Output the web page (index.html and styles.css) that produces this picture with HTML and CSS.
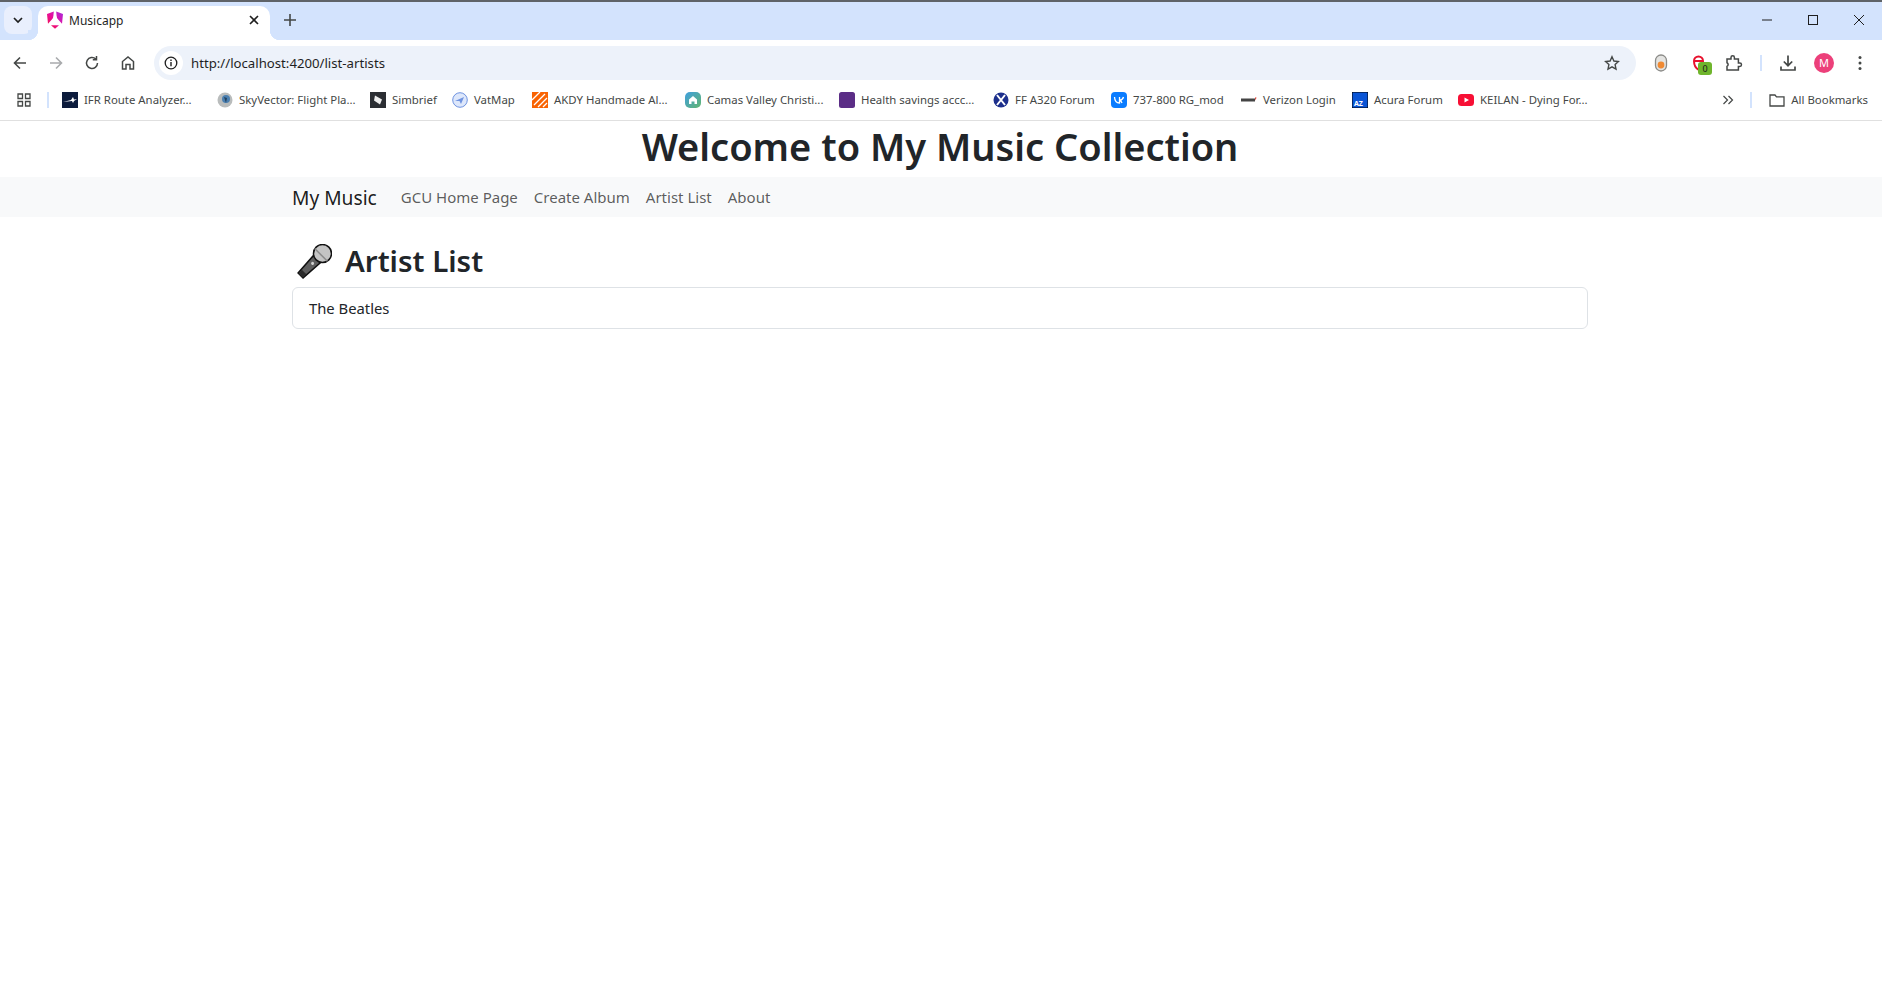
FILE: index.html
```html
<!DOCTYPE html>
<html lang="en">
<head>
  <meta charset="UTF-8">
  <title>Musicapp</title>
  <link rel="stylesheet" href="styles.css">
</head>
<body>

  <!-- Browser window -->
  <div class="tabstrip">
    <div class="tab-search">
      <svg width="12" height="12" viewBox="0 0 12 12"><path d="M2 4l4 4 4-4" fill="none" stroke="#1f1f1f" stroke-width="1.7"/></svg>
    </div>
    <div class="tab">
      <svg width="18" height="18" viewBox="0 0 18 18"><defs><linearGradient id="ng" x1="0" y1="1" x2="1" y2="0"><stop offset="0" stop-color="#f5113a"/><stop offset="0.5" stop-color="#e80f9c"/><stop offset="1" stop-color="#a52be0"/></linearGradient></defs><path d="M7.800 0.500L1 3l1 9.800L7.200 7zM10.200 0.500L17 3l-1 9.800L10.800 7zM5 14.200h8L9 17.800z" fill="url(#ng)"/><path d="M9 2.500L4.500 12.800h2l.8-2h3.400l.8 2h2zM8 9l1-2.800L10 9z" fill="#fff"/></svg>
      <span class="tab-title">Musicapp</span>
      <svg class="tab-close" width="12" height="12" viewBox="0 0 12 12"><path d="M2 2l8 8M10 2l-8 8" stroke="#1f1f1f" stroke-width="1.6"/></svg>
    </div>
    <svg class="new-tab" width="14" height="14" viewBox="0 0 14 14"><path d="M7 1v12M1 7h12" stroke="#444746" stroke-width="1.6"/></svg>
    <div class="window-controls">
      <svg width="12" height="12" viewBox="0 0 12 12"><path d="M1 6h10" stroke="#1f1f1f"/></svg>
      <svg width="12" height="12" viewBox="0 0 12 12"><rect x="1.500" y="1.500" width="9" height="9" fill="none" stroke="#1f1f1f"/></svg>
      <svg width="12" height="12" viewBox="0 0 12 12"><path d="M1 1l10 10M11 1L1 11" stroke="#1f1f1f"/></svg>
    </div>
  </div>

  <div class="toolbar">
    <div class="nav-buttons">
      <svg width="16" height="16" viewBox="0 0 16 16"><path d="M14 8H2.500M8 2.500L2.500 8 8 13.500" fill="none" stroke="#444746" stroke-width="1.600"/></svg>
      <svg width="16" height="16" viewBox="0 0 16 16"><path d="M2 8h11.500M8 2.500L13.500 8 8 13.500" fill="none" stroke="#a9abad" stroke-width="1.600"/></svg>
      <svg width="16" height="16" viewBox="0 0 16 16"><path d="M13.500 8A5.500 5.500 0 1 1 11.800 4M12.500 1v3.700H8.800" fill="none" stroke="#444746" stroke-width="1.500"/></svg>
      <svg width="16" height="16" viewBox="0 0 16 16"><path d="M2.500 14V6.500L8 2l5.500 4.500V14H10V9.500H6V14z" fill="none" stroke="#444746" stroke-width="1.500"/></svg>
    </div>
    <div class="address-bar">
      <span class="site-info">
        <svg width="14" height="14" viewBox="0 0 14 14"><circle cx="7" cy="7" r="5.800" fill="none" stroke="#1f1f1f" stroke-width="1.300"/><path d="M7 6v4.200M7 3.600v1.300" stroke="#1f1f1f" stroke-width="1.400"/></svg>
      </span>
      <span class="url">http://localhost:4200/list-artists</span>
      <svg class="star" width="16" height="16" viewBox="0 0 16 16"><path d="M8 1.800l1.900 4.200 4.500.5-3.300 3.100.9 4.500L8 11.800l-4 2.300.9-4.500L1.600 6.500l4.500-.5z" fill="none" stroke="#444746" stroke-width="1.400"/></svg>
    </div>
    <div class="extensions">
      <svg class="ext-toggle" width="14" height="18" viewBox="0 0 14 18"><rect x="1.500" y="1" width="11" height="16" rx="5.500" fill="#e4e4e2" stroke="#8b8b88" stroke-width="1.300"/><circle cx="7" cy="11" r="3.400" fill="#f08a33"/></svg>
      <span class="ext-badge-wrap">
        <svg width="14" height="18" viewBox="0 0 14 18"><path d="M2 7a4.500 4.500 0 0 1 9 0H3M2 7c0 4 1 7 5 9" fill="none" stroke="#e8112d" stroke-width="2"/></svg>
        <span class="ext-badge">0</span>
      </span>
      <svg width="18" height="18" viewBox="0 0 18 18"><path d="M2 5h4V3.500a1.700 1.700 0 0 1 3.400 0V5h4v4h1.400a1.700 1.700 0 0 1 0 3.400h-1.400V16H2v-3.700a2 2 0 0 0 0-3.600z" fill="none" stroke="#444746" stroke-width="1.500"/></svg>
      <span class="toolbar-sep"></span>
      <svg width="18" height="18" viewBox="0 0 18 18"><path d="M9 1.500v10M4.800 7.500L9 11.700l4.200-4.200M2 12.500v3.500h14v-3.500" fill="none" stroke="#444746" stroke-width="1.700"/></svg>
      <span class="avatar">M</span>
      <svg width="6" height="16" viewBox="0 0 6 16"><circle cx="3" cy="2.500" r="1.500" fill="#444746"/><circle cx="3" cy="8" r="1.500" fill="#444746"/><circle cx="3" cy="13.500" r="1.500" fill="#444746"/></svg>
    </div>
  </div>

  <div class="bookmarks">
    <svg class="apps-icon" width="14" height="14" viewBox="0 0 14 14"><path d="M1 1h4.500v4.500H1zM8.500 1H13v4.500H8.500zM1 8.500h4.500V13H1zM8.500 8.500H13V13H8.500z" fill="none" stroke="#444746" stroke-width="1.300"/></svg>
    <span class="bookmark-sep"></span>
    <a class="bookmark b-ifr"><svg width="16" height="16" viewBox="0 0 16 16"><rect width="16" height="16" fill="#0c1b3c"/><path d="M1 10l8-2 2-3 1 2.500 3-.5-3 2-1 2-1-2z" fill="#fff"/></svg>IFR Route Analyzer...</a>
    <a class="bookmark b-sky"><svg width="16" height="16" viewBox="0 0 16 16"><circle cx="8" cy="8" r="7.500" fill="#b9bcbc"/><circle cx="9" cy="7" r="4" fill="#4a7fb0"/><path d="M7 5l3 1-1 5z" fill="#23425f"/></svg>SkyVector: Flight Pla...</a>
    <a class="bookmark b-sim"><svg width="16" height="16" viewBox="0 0 16 16"><rect width="16" height="16" fill="#2b2e33"/><path d="M5 3.500l7 4-2 5-6-4z" fill="#eee"/></svg>Simbrief</a>
    <a class="bookmark b-vat"><svg width="16" height="16" viewBox="0 0 16 16"><circle cx="8" cy="8" r="7.300" fill="#dde7fb" stroke="#6f93e0"/><path d="M3 9l9-4-3 7-1.500-3z" fill="#6f93e0"/></svg>VatMap</a>
    <a class="bookmark b-akdy"><svg width="16" height="16" viewBox="0 0 16 16"><rect width="16" height="16" fill="#f96302"/><path d="M0 8l8-8M2 13L13 2M6 15l9-9M11 15l4-4" stroke="#fff" stroke-width="1.300"/></svg>AKDY Handmade Al...</a>
    <a class="bookmark b-camas"><svg width="16" height="16" viewBox="0 0 16 16"><defs><linearGradient id="camas" x1="0" y1="0" x2="1" y2="1"><stop offset="0" stop-color="#3f9fe0"/><stop offset="1" stop-color="#62b56f"/></linearGradient></defs><rect width="16" height="16" rx="5" fill="url(#camas)"/><path d="M8 4l4 3.500V12H9.500V9.500h-3V12H4V7.500z" fill="#fff"/></svg>Camas Valley Christi...</a>
    <a class="bookmark b-health"><svg width="16" height="16" viewBox="0 0 16 16"><rect width="16" height="16" rx="2.500" fill="#5b2d86"/></svg>Health savings accc...</a>
    <a class="bookmark b-ff"><svg width="16" height="16" viewBox="0 0 16 16"><circle cx="8" cy="8" r="7.500" fill="#1c2f8c"/><path d="M4 3l8 10M12 3L4 13" stroke="#fff" stroke-width="2"/></svg>FF A320 Forum</a>
    <a class="bookmark b-vk"><svg width="16" height="16" viewBox="0 0 16 16"><rect width="16" height="16" rx="4" fill="#0a7cff"/><path d="M3.500 5c.2 3.500 2 6 5 6V8.500c1 .1 2 1 2.500 2.500M12.500 5c-.4 1.500-1.500 3-4 3.500V5" fill="none" stroke="#fff" stroke-width="1.300"/></svg>737-800 RG_mod</a>
    <a class="bookmark b-verizon"><svg width="16" height="16" viewBox="0 0 16 16"><rect y="6.500" width="14" height="3" fill="#444"/><path d="M14 5.500l1.500 0-1 3z" fill="#d52b1e"/></svg>Verizon Login</a>
    <a class="bookmark b-acura"><svg width="16" height="16" viewBox="0 0 16 16"><rect width="16" height="16" fill="#0a55d6" stroke="#000"/><text x="2" y="14" class="acura-mark">AZ</text></svg>Acura Forum</a>
    <a class="bookmark b-keilan"><svg width="16" height="16" viewBox="0 0 16 16"><rect y="2" width="16" height="12" rx="3.500" fill="#f70f35"/><path d="M6.500 5.500L11 8l-4.500 2.500z" fill="#fff"/></svg>KEILAN - Dying For...</a>
    <svg class="more-bookmarks" width="12" height="12" viewBox="0 0 12 12"><path d="M1.500 2l4 4-4 4M6.500 2l4 4-4 4" fill="none" stroke="#444746" stroke-width="1.200"/></svg>
    <span class="bookmark-sep"></span>
    <a class="all-bookmarks"><svg width="16" height="16" viewBox="0 0 16 16"><path d="M1 3h5l1.500 1.800H15V14H1z" fill="none" stroke="#444746" stroke-width="1.300"/></svg>All Bookmarks</a>
  </div>

  <!-- Page -->
  <h1 class="site-title">Welcome to My Music Collection</h1>

  <nav class="navbar">
    <div class="container navbar-inner">
      <a class="navbar-brand">My Music</a>
      <ul class="nav-links">
        <li><a>GCU Home Page</a></li>
        <li><a>Create Album</a></li>
        <li><a>Artist List</a></li>
        <li><a>About</a></li>
      </ul>
    </div>
  </nav>

  <main class="container">
    <h2 class="page-heading">
      <svg class="mic" width="36" height="36" viewBox="0 0 36 36">
        <g transform="rotate(45 18 18)">
          <path d="M13 14h10l-1.500 23h-7z" fill="#5e5e5e" stroke="#111" stroke-width="1.500"/>
          <path d="M14.800 32h6.400l-.3 5h-5.800z" fill="#2b2b2b"/>
          <circle cx="18" cy="20" r="1.500" fill="#cfcfcf"/>
          <circle cx="18" cy="6" r="9" fill="#c4c4c4" stroke="#111" stroke-width="1.500"/>
          <path d="M9 8h18" stroke="#8a8a8a" stroke-width="1.500"/>
        </g>
      </svg>
      <span class="heading-text">Artist List</span>
    </h2>
    <ul class="list-group">
      <li class="list-group-item">The Beatles</li>
    </ul>
  </main>

</body>
</html>
```

FILE: styles.css
```css
body {
  margin: 0;
  font-family: "Noto Sans", "Open Sans", sans-serif;
  background: white;
  color: #212529;
}

/* browser window */

.tabstrip {
  height: 38px;
  border-top: 2px solid #5f6368;
  background: #d3e3fd;
  display: flex;
  align-items: flex-end;
}

.tab-search {
  width: 28px;
  height: 28px;
  margin: 0 6px 6px 4px;
  border-radius: 8px;
  background: #e9effd;
  display: flex;
  align-items: center;
  justify-content: center;
}

.tab {
  position: relative;
  width: 232px;
  height: 34px;
  box-sizing: border-box;
  padding: 0 10px 6px 8px;
  background: white;
  border-radius: 10px 10px 0 0;
  display: flex;
  align-items: center;
  gap: 5px;
  font-size: 12px;
  color: #1f1f1f;
}

.tab::before,
.tab::after {
  content: "";
  position: absolute;
  bottom: 0;
  width: 10px;
  height: 10px;
}

.tab::before {
  left: -10px;
  background: radial-gradient(circle at 0 0, #d3e3fd 10px, white 10.5px);
}

.tab::after {
  right: -10px;
  background: radial-gradient(circle at 100% 0, #d3e3fd 10px, white 10.5px);
}

.tab-title {
  flex: 1;
}

.new-tab {
  margin: 0 0 13px 13px;
}

.window-controls {
  margin-left: auto;
  display: flex;
  gap: 34px;
  padding-right: 17px;
  margin-bottom: 14px;
}

.toolbar {
  height: 40px;
  box-sizing: border-box;
  padding-top: 6px;
  background: white;
  border-radius: 10px 10px 0 0;
  display: flex;
  align-items: center;
}

.nav-buttons {
  display: flex;
  gap: 20px;
  padding-left: 12px;
  width: 154px;
  box-sizing: border-box;
}

.address-bar {
  width: 1482px;
  height: 34px;
  background: #edf2fa;
  border-radius: 17px;
  display: flex;
  align-items: center;
  padding: 0 16px 0 5px;
  box-sizing: border-box;
  font-size: 13.2px;
  color: #1f1f1f;
}

.site-info {
  width: 24px;
  height: 24px;
  border-radius: 50%;
  background: white;
  display: flex;
  align-items: center;
  justify-content: center;
  margin-right: 8px;
}

.url {
  flex: 1;
}

.extensions {
  flex: 1;
  display: flex;
  align-items: center;
  gap: 17px;
  padding-left: 18px;
}

.ext-toggle {
  margin-right: 7px;
}

.ext-badge-wrap {
  position: relative;
  display: flex;
  margin-right: 2px;
}

.ext-badge {
  position: absolute;
  left: 6px;
  top: 8px;
  width: 14px;
  height: 13px;
  background: #6fb52c;
  border-radius: 3px;
  font-size: 9px;
  line-height: 13px;
  text-align: center;
  color: #1a1a1a;
}

.toolbar-sep {
  width: 2px;
  height: 16px;
  background: #d3e3fd;
}

.avatar {
  width: 20px;
  height: 20px;
  margin-right: 6px;
  border-radius: 50%;
  background: #ec407a;
  color: white;
  font-size: 11px;
  line-height: 20px;
  text-align: center;
}

.bookmarks {
  height: 41px;
  box-sizing: border-box;
  border-bottom: 1px solid #e0e0e0;
  padding-bottom: 1px;
  display: flex;
  align-items: center;
  padding-left: 17px;
  font-size: 11.4px;
  color: #444746;
  background: white;
}

.apps-icon {
  margin-right: 16px;
}

.bookmark-sep {
  width: 2px;
  height: 16px;
  background: #d3e3fd;
  margin-right: 13px;
}

.bookmark,
.all-bookmarks {
  display: flex;
  align-items: center;
  gap: 6px;
  white-space: nowrap;
}

/* chrome gives each bookmark button its own width */
.b-ifr { width: 155px; }
.b-sky { width: 153px; }
.b-sim { width: 82px; }
.b-vat { width: 80px; }
.b-akdy { width: 153px; }
.b-camas { width: 154px; }
.b-health { width: 154px; }
.b-ff { width: 118px; }
.b-vk { width: 130px; }
.b-verizon { width: 111px; }
.b-acura { width: 106px; }

.acura-mark {
  font-size: 7px;
  font-weight: bold;
  fill: white;
}

.more-bookmarks {
  margin: 0 16px 0 auto;
}

.all-bookmarks {
  margin: 0 14px 0 4px;
}

/* page */

.site-title {
  margin: 0;
  padding-right: 2px;
  height: 56px;
  line-height: 50px;
  text-align: center;
  font-size: 38px;
  font-weight: 600;
}

.container {
  width: 1296px;
  margin-left: 292px;
}

.navbar {
  height: 40px;
  background: #f8f9fa;
}

.navbar-inner {
  height: 100%;
  display: flex;
  align-items: center;
}

.navbar-brand {
  font-size: 19.2px;
  color: rgba(0, 0, 0, 0.9);
  margin-right: 24px;
}

.nav-links {
  list-style: none;
  margin: 0;
  padding: 0;
  display: flex;
  gap: 16px;
  font-size: 15px;
  color: rgba(0, 0, 0, 0.65);
}

.page-heading {
  margin: 20px 0 0;
  height: 50px;
  display: flex;
  align-items: center;
  gap: 13px;
  padding-left: 4px;
  font-size: 29.5px;
  font-weight: 600;
}

.heading-text {
  margin-top: -3px;
}

.list-group {
  list-style: none;
  margin: 0;
  padding: 0;
}

.list-group-item {
  height: 42px;
  box-sizing: border-box;
  border: 1px solid #dee2e6;
  border-radius: 6px;
  padding: 0 16px;
  display: flex;
  align-items: center;
  font-size: 14.8px;
}
```
